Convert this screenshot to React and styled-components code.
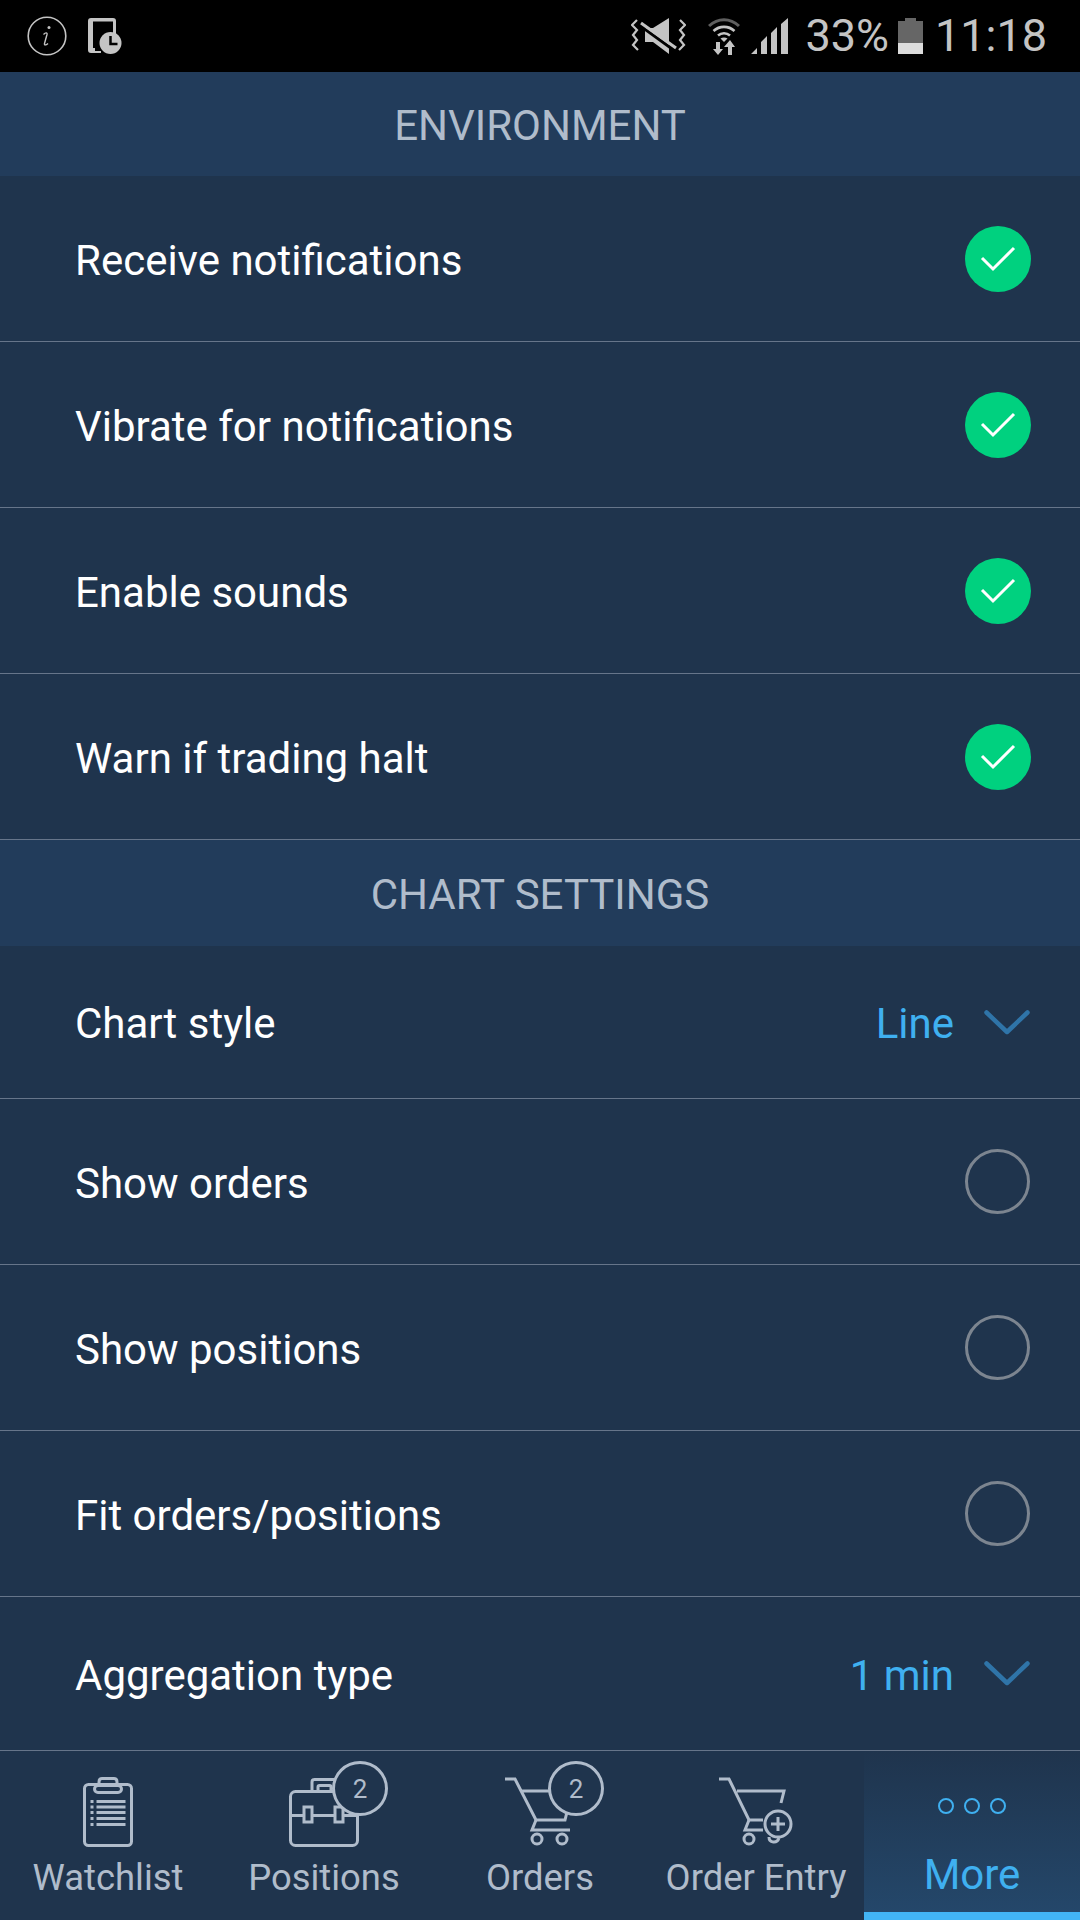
import React from "react";
import styled, { createGlobalStyle } from "styled-components";

const GlobalStyle = createGlobalStyle`
  html, body {
    margin: 0;
    padding: 0;
    background: #1f344d;
  }
  * {
    box-sizing: border-box;
  }
`;

const Screen = styled.div`
  width: 1080px;
  height: 1920px;
  display: flex;
  flex-direction: column;
  overflow: hidden;
  background: #1f344d;
  font-family: Roboto, "Liberation Sans", sans-serif;
`;

const StatusBar = styled.div`
  height: 72px;
  flex: none;
  display: flex;
  align-items: center;
  justify-content: space-between;
  padding: 0 33px 0 27px;
  background: #000;
  color: #c4c4c4;
`;

const StatusGroup = styled.div`
  display: flex;
  align-items: center;
`;

const StatusText = styled.span`
  font-size: 45px;
  line-height: 72px;
  margin-left: ${(p) => p.$left || 0}px;
`;

const StatusIcon = styled.svg`
  display: block;
  flex: none;
  margin-left: ${(p) => p.$left || 0}px;
`;

const SectionHeader = styled.div`
  height: ${(p) => p.$height}px;
  flex: none;
  display: flex;
  align-items: center;
  justify-content: center;
  padding-top: 2px;
  background: #223c5b;
  color: #b0bccb;
  font-size: 42px;
`;

const Row = styled.div`
  height: ${(p) => p.$height || 166}px;
  flex: none;
  display: flex;
  align-items: center;
  justify-content: space-between;
  padding: 0 49px 0 75px;
  border-bottom: 1px solid #66758a;
  color: #fff;
  font-size: 42px;
`;

const RowLabel = styled.span`
  margin-top: 3px;
`;

const CheckOn = styled.div`
  width: 66px;
  height: 66px;
  border-radius: 50%;
  background: #00d17f;
  display: flex;
  align-items: center;
  justify-content: center;
`;

const CheckOff = styled.div`
  width: 65px;
  height: 65px;
  margin-right: 1px;
  border-radius: 50%;
  border: 3px solid #7c8590;
`;

const SelectValue = styled.div`
  display: flex;
  align-items: center;
  gap: 30px;
  padding-right: 1px;
  color: #3fb0f0;
`;

const SelectText = styled.span`
  margin-top: 3px;
`;

const TabBar = styled.div`
  flex: 1;
  display: grid;
  grid-template-columns: repeat(5, 1fr);
`;

const Tab = styled.div`
  position: relative;
  display: flex;
  flex-direction: column;
  align-items: center;
  padding-top: 26px;
  color: #b0bccb;
  font-size: 36.4px;
`;

const ActiveTab = styled(Tab)`
  color: #3fb0f0;
  font-size: 42px;
  padding-top: 47px;
  border-bottom: 8px solid #42b4f5;
  background: linear-gradient(#1f344d, #24476a);
`;

const TabIconBox = styled.div`
  height: 70px;
  display: flex;
  align-items: flex-end;
  margin-bottom: 9px;
  position: relative;
  left: ${(p) => p.$shift || 0}px;
`;

const TabLabel = styled.span`
  line-height: 44px;
  white-space: nowrap;
`;

const Badge = styled.div`
  position: absolute;
  top: -16px;
  left: ${(p) => p.$left}px;
  width: 56px;
  height: 55px;
  border-radius: 50%;
  border: 3px solid #b0bccb;
  background: #1f344d;
  color: #b0bccb;
  font-size: 26px;
  display: flex;
  align-items: center;
  justify-content: center;
`;

const Dots = styled.div`
  display: flex;
  gap: 10px;
  margin-bottom: 39px;
`;

const Dot = styled.span`
  width: 16px;
  height: 16px;
  border-radius: 50%;
  border: 2px solid #3fb0f0;
`;

const InfoIcon = () => (
  <StatusIcon width="40" height="40" viewBox="0 0 40 40">
    <circle cx="20" cy="20" r="18.8" fill="none" stroke="#c4c4c4" strokeWidth="1.6" />
    <circle cx="22" cy="11.5" r="1.5" fill="#c4c4c4" />
    <path d="M16.5 18.5c2-2 4-2.200 3.500 0l-2.500 9c-.4 2 1.500 1.800 3.500 0" fill="none" stroke="#c4c4c4" strokeWidth="1.4" />
  </StatusIcon>
);

const TabletClockIcon = () => (
  <StatusIcon $left={21} width="34" height="37" viewBox="0 0 34 37">
    <path
      d="M3 0h22c2 0 3 1 3 3v13h-3V3.500H5V30h2v3h6v2H3c-2 0-3-1-3-3V3c0-2 1-3 3-3z"
      fill="#c4c4c4"
    />
    <circle cx="22.500" cy="25" r="11" fill="#c4c4c4" />
    <path d="M22.500 18v8h7" fill="none" stroke="#000" strokeWidth="2.500" />
  </StatusIcon>
);

const MuteVibrateIcon = () => (
  <StatusIcon width="55" height="36" viewBox="0 0 55 36">
    <path
      d="M6 2 1 7l5 5-4 5 4 5-4 5 5 5M49 2l5 5-5 5 4 5-4 5 4 5-5 5"
      fill="none"
      stroke="#c4c4c4"
      strokeWidth="2.200"
    />
    <path d="M14 10h8L38 0v36L22 24h-8z" fill="#c4c4c4" />
    <path d="M11 9 44 33" stroke="#000" strokeWidth="3" />
    <path d="M10 5 45 30" stroke="#c4c4c4" strokeWidth="3" />
  </StatusIcon>
);

const WifiIcon = () => (
  <StatusIcon $left={22} width="32" height="37" viewBox="0 0 32 37">
    <path d="M1 8c9-8.500 21-8.500 30 0" fill="none" stroke="#5f5f5f" strokeWidth="3" />
    <path d="M5.500 13c6-5.500 15-5.500 21 0" fill="none" stroke="#c4c4c4" strokeWidth="2.600" />
    <path d="M10 17.500c3.500-3 8.500-3 12 0" fill="none" stroke="#c4c4c4" strokeWidth="2.600" />
    <path d="M16 24l-3.500-3.500c2-1.500 5-1.500 7 0z" fill="#c4c4c4" />
    <path d="M8 24h4v7h3l-5 6-5-6h3zM20 37v-8h-4l6-7 5 7h-3v8z" fill="#c4c4c4" />
  </StatusIcon>
);

const SignalIcon = () => (
  <StatusIcon $left={11} width="37" height="36" viewBox="0 0 37 36">
    <path d="M0 36 6 30v6zM10 36V24l6-6v18zM20 36V15l6-6v27zM30 36V6l7-6v36z" fill="#c4c4c4" />
  </StatusIcon>
);

const BatteryIcon = () => (
  <StatusIcon $left={9} width="25" height="36" viewBox="0 0 25 36">
    <path d="M0 3h7V0h11v3h7v23H0z" fill="#666" />
    <path d="M0 25h25v11H0z" fill="#dcdcdc" />
  </StatusIcon>
);

const CheckMark = () => (
  <svg width="36" height="26" viewBox="0 0 36 26">
    <path d="M2 12l11 11L34 2" fill="none" stroke="#fff" strokeWidth="3" />
  </svg>
);

const Chevron = () => (
  <svg width="46" height="25" viewBox="0 0 46 25">
    <path d="M2.500 2.500 23 22 43.500 2.500" fill="none" stroke="#2f74a8" strokeWidth="4.500" strokeLinecap="round" strokeLinejoin="round" />
  </svg>
);

const ClipboardIcon = () => (
  <svg width="50" height="70" viewBox="0 0 50 70" fill="none" stroke="#b0bccb" strokeWidth="3">
    <rect x="1.500" y="7.500" width="47" height="61" rx="4" />
    <rect x="11.500" y="8.500" width="27" height="7" rx="3.500" />
    <path d="M16 8V5c0-2 1-3.500 3-3.500h12c2 0 3 1.500 3 3.500v3" />
    <path d="M13.500 24.500h29M13.500 30h29M13.500 35.500h29M13.500 41.500h29M13.500 47.500h29" />
    <path d="M7.500 24.500h3M7.500 30h3M7.500 35.500h3M7.500 41.500h3M7.500 47.500h3" />
  </svg>
);

const BriefcaseIcon = () => (
  <svg width="70" height="69" viewBox="0 0 70 69" fill="none" stroke="#b0bccb" strokeWidth="3">
    <rect x="1.500" y="13.500" width="67" height="54" rx="5" />
    <path d="M2 37.500h66" />
    <path d="M23 13V4c0-1.500 1-2.500 2.500-2.500H46c1.500 0 2.500 1 2.500 2.500v9" />
    <path d="M29 13V9c0-1 .5-1.500 1.500-1.500h10c1 0 1.500 .5 1.500 1.500v4" />
    <rect x="15" y="29" width="8" height="15" fill="#1f344d" />
    <rect x="46" y="29" width="8" height="15" fill="#1f344d" />
  </svg>
);

const CartIcon = () => (
  <svg width="66" height="70" viewBox="0 0 66 70" fill="none" stroke="#b0bccb" strokeWidth="3">
    <path d="M0 2h10l21 41h29l2-8M17 14h30" />
    <path d="M31 43l-4 10h38" />
    <circle cx="32" cy="62" r="5" />
    <circle cx="57" cy="62" r="5" />
  </svg>
);

const CartPlusIcon = () => (
  <svg width="74" height="70" viewBox="0 0 74 70" fill="none" stroke="#b0bccb" strokeWidth="3">
    <path d="M0 2h10l20 41h14M18 14h47l-3 12" />
    <path d="M30 43l-4 10h18" />
    <circle cx="59" cy="47" r="13" />
    <path d="M59 40v14M52 47h14" />
    <circle cx="30" cy="62" r="5" />
    <path d="M50 60c0 6 8 7 10 1" />
  </svg>
);

const toggleRows = ["Receive notifications", "Vibrate for notifications", "Enable sounds", "Warn if trading halt"];
const chartRows = ["Show orders", "Show positions", "Fit orders/positions"];

const App = () => {
  return (
    <Screen>
      <GlobalStyle />
      <StatusBar>
        <StatusGroup>
          <InfoIcon />
          <TabletClockIcon />
        </StatusGroup>
        <StatusGroup>
          <MuteVibrateIcon />
          <WifiIcon />
          <SignalIcon />
          <StatusText $left={17}>33%</StatusText>
          <BatteryIcon />
          <StatusText $left={12}>11:18</StatusText>
        </StatusGroup>
      </StatusBar>

      <SectionHeader $height={104}>ENVIRONMENT</SectionHeader>
      {toggleRows.map((label) => (
        <Row key={label}>
          <RowLabel>{label}</RowLabel>
          <CheckOn>
            <CheckMark />
          </CheckOn>
        </Row>
      ))}

      <SectionHeader $height={106}>CHART SETTINGS</SectionHeader>
      <Row $height={153}>
        <RowLabel>Chart style</RowLabel>
        <SelectValue>
          <SelectText>Line</SelectText>
          <Chevron />
        </SelectValue>
      </Row>
      {chartRows.map((label) => (
        <Row key={label}>
          <RowLabel>{label}</RowLabel>
          <CheckOff />
        </Row>
      ))}
      <Row $height={154}>
        <RowLabel>Aggregation type</RowLabel>
        <SelectValue>
          <SelectText>1 min</SelectText>
          <Chevron />
        </SelectValue>
      </Row>

      <TabBar>
        <Tab>
          <TabIconBox>
            <ClipboardIcon />
          </TabIconBox>
          <TabLabel>Watchlist</TabLabel>
        </Tab>
        <Tab>
          <TabIconBox>
            <BriefcaseIcon />
            <Badge $left={43}>2</Badge>
          </TabIconBox>
          <TabLabel>Positions</TabLabel>
        </Tab>
        <Tab>
          <TabIconBox $shift={-2}>
            <CartIcon />
            <Badge $left={43}>2</Badge>
          </TabIconBox>
          <TabLabel>Orders</TabLabel>
        </Tab>
        <Tab>
          <TabIconBox>
            <CartPlusIcon />
          </TabIconBox>
          <TabLabel>Order Entry</TabLabel>
        </Tab>
        <ActiveTab>
          <Dots>
            <Dot />
            <Dot />
            <Dot />
          </Dots>
          <TabLabel>More</TabLabel>
        </ActiveTab>
      </TabBar>
    </Screen>
  );
};

export default App;
